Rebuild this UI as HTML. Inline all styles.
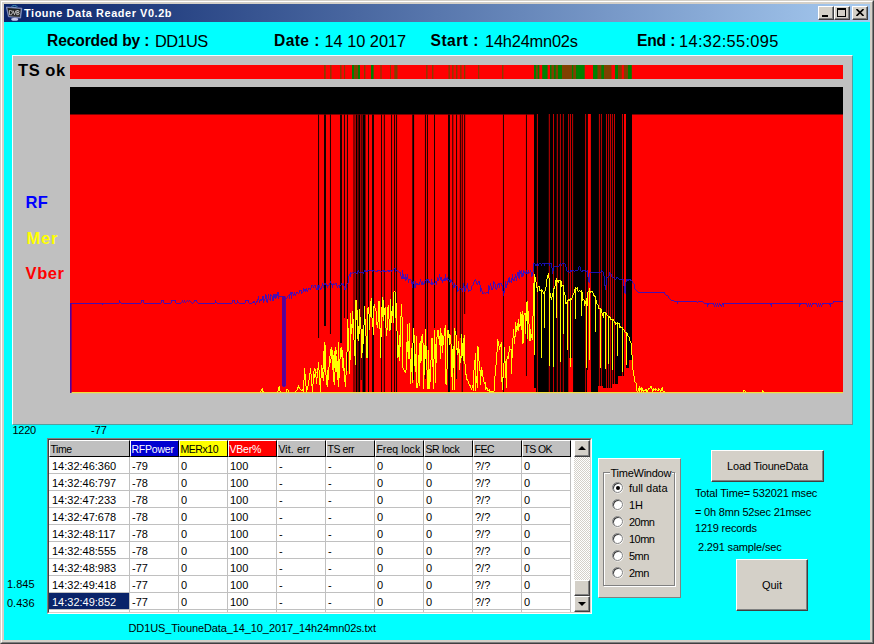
<!DOCTYPE html>
<html><head><meta charset="utf-8">
<style>
*{box-sizing:border-box;margin:0;padding:0}
html,body{width:874px;height:644px;overflow:hidden;background:#00ffff}
body{position:relative;font-family:"Liberation Sans",sans-serif;font-size:11px;color:#000}
.abs{position:absolute}
#frame{position:absolute;left:0;top:0;width:874px;height:644px;
 border-style:solid;border-width:1px;border-color:#d4d0c8 #404040 #404040 #d4d0c8}
#frame2{position:absolute;left:1px;top:1px;width:872px;height:642px;
 border-style:solid;border-width:1px;border-color:#fff #808080 #808080 #fff}
#frame3{position:absolute;left:2px;top:2px;width:870px;height:640px;border:2px solid #d4d0c8}
#title{position:absolute;left:4px;top:4px;width:866px;height:18px;
 background:linear-gradient(to right,#0a246a 0%,#a6caf0 100%)}
#title .t{position:absolute;left:20px;top:2px;color:#fff;font-weight:bold;font-size:10.9px;letter-spacing:0.58px;line-height:14px;white-space:nowrap}
.tb{position:absolute;top:2px;width:16px;height:14px;background:#d4d0c8;
 border-style:solid;border-width:1px;border-color:#fff #404040 #404040 #fff;box-shadow:inset -1px -1px 0 #808080}
.h{position:absolute;top:32px;line-height:18px;white-space:nowrap}
.hb{font-weight:bold;font-size:15.6px;top:31.5px}
.hr{font-size:16.4px;top:32px}
#panel{position:absolute;left:12px;top:55px;width:841px;height:370px;background:#c0c0c0;border-left:1px solid #f4ffff;border-top:1px solid #f4ffff;border-right:1px solid #50a0a0;border-bottom:1px solid #50a0a0}
.lbl{position:absolute;font-weight:bold;font-size:16.5px;letter-spacing:0.55px;line-height:18px;white-space:nowrap}
.s{position:absolute;font-size:11px;line-height:13px;white-space:nowrap}
#grid{position:absolute;left:47px;top:438px;width:545px;height:176px;background:#fff;
 border-style:solid;border-width:1px;border-color:#808080 #fff #fff #808080}
#grid .in{position:absolute;left:0;top:0;width:543px;height:174px;border-style:solid;border-width:1px;border-color:#404040 #d4d0c8 #d4d0c8 #404040;overflow:hidden}
.hc{position:absolute;top:0;height:17px;background:#c0c0c0;border-right:1px solid #000;border-bottom:1px solid #000;border-top:1px solid #fff;border-left:1px solid #fff;padding-left:0.4px;line-height:17px;font-size:10.5px;letter-spacing:-0.4px;white-space:nowrap;overflow:hidden}
.c{position:absolute;height:17px;border-right:1px solid #c0c0c0;border-bottom:1px solid #c0c0c0;padding-left:2px;padding-top:1px;line-height:17px;font-size:11px;white-space:nowrap;overflow:hidden}
.btn{position:absolute;background:#d4d0c8;border-style:solid;border-width:1px;border-color:#fff #404040 #404040 #fff;box-shadow:inset -1px -1px 0 #808080;text-align:center;font-size:11px}
.radio{position:absolute;left:612.3px;width:11px;height:11px;border-radius:50%;background:#fff;border:1px solid #808080;box-shadow:inset 1px 1px 0 #404040, 0.5px 0.5px 0 #fff}
.rl{position:absolute;left:629px;font-size:11px;line-height:13px;white-space:nowrap}
</style></head><body>
<div id="frame"></div><div id="frame2"></div><div id="frame3"></div>
<div id="title">
 <svg class="abs" style="left:2px;top:1px" width="17" height="17" viewBox="0 0 17 17">
  <ellipse cx="8.4" cy="1.5" rx="2.6" ry="1.0" fill="none" stroke="#4a9cc0" stroke-width="0.9"/>
  <ellipse cx="8.7" cy="14.3" rx="3.5" ry="1.5" fill="#c4ccec"/>
  <path d="M0.3 2.0 L15.9 3.2 L14.6 13.1 L2.4 11.7 Z" fill="#6f7aa8" stroke="#a4aed4" stroke-width="0.6" stroke-linejoin="round"/>
  <path d="M1.5 3.1 L14.7 4.1 L13.7 12.0 L3.1 10.9 Z" fill="#202020"/>
  <path d="M3.4 5.5 V9.7 H4.6 Q6.4 9.6 6.4 7.6 Q6.4 5.6 4.6 5.5 Z M7.0 5.5 L8.5 9.7 L10 5.5 M10.8 5.5 V9.7 H12.2 Q13.2 9.6 13.2 8.6 Q13.2 7.7 12.1 7.6 H10.8 M12.1 7.6 Q13 7.5 13 6.5 Q13 5.6 12.1 5.5 H10.8" fill="none" stroke="#d8d8d8" stroke-width="0.85" stroke-linejoin="round"/>
  <path d="M3.4 10.6 L13.4 11.5" stroke="#555" stroke-width="0.7"/>
 </svg>
 <div class="t">Tioune Data Reader V0.2b</div>
 <div class="tb" style="left:814px"><div class="abs" style="left:3px;top:8px;width:6px;height:2px;background:#000"></div></div>
 <div class="tb" style="left:830px"><div class="abs" style="left:2px;top:1px;width:9px;height:9px;border:1px solid #000;border-top-width:2px"></div></div>
 <div class="tb" style="left:848px"><svg class="abs" style="left:3px;top:2px" width="8" height="7" viewBox="0 0 8 7"><path d="M0.5 0 L7.5 7 M7.5 0 L0.5 7" stroke="#000" stroke-width="1.6"/></svg></div>
</div>

<div class="h hb" style="left:47px;letter-spacing:-0.12px">Recorded by :</div><div class="h hr" style="left:155px;letter-spacing:-0.58px">DD1US</div>
<div class="h hb" style="left:274px;letter-spacing:0.4px">Date :</div><div class="h hr" style="left:324.5px;letter-spacing:-0.04px">14 10 2017</div>
<div class="h hb" style="left:430.5px;letter-spacing:0.48px">Start :</div><div class="h hr" style="left:485px;letter-spacing:-0.2px">14h24mn02s</div>
<div class="h hb" style="left:637px;letter-spacing:-0.16px">End :</div><div class="h hr" style="left:679px;letter-spacing:0.33px">14:32:55:095</div>

<div id="panel"></div>
<svg class="abs" style="left:0;top:0" width="874" height="430" viewBox="0 0 874 430">
<rect x="70" y="65" width="773" height="14" fill="#f00"/>
<rect x="324.1" y="65" width="1.6" height="14" fill="#804000"/>
<rect x="330.1" y="65" width="1.4" height="14" fill="#804000"/>
<rect x="340.1" y="65" width="1.4" height="14" fill="#804000"/>
<rect x="344.1" y="65" width="1.0" height="14" fill="#804000"/>
<rect x="364.0" y="65" width="1.4" height="14" fill="#804000"/>
<rect x="380.4" y="65" width="1.2" height="14" fill="#804000"/>
<rect x="390.0" y="65" width="1.0" height="14" fill="#804000"/>
<rect x="426.2" y="65" width="1.3" height="14" fill="#804000"/>
<rect x="432.1" y="65" width="1.3" height="14" fill="#804000"/>
<rect x="448.5" y="65" width="1.3" height="14" fill="#804000"/>
<rect x="452.2" y="65" width="1.3" height="14" fill="#804000"/>
<rect x="456.1" y="65" width="1.3" height="14" fill="#804000"/>
<rect x="460.2" y="65" width="1.3" height="14" fill="#804000"/>
<rect x="464.0" y="65" width="1.3" height="14" fill="#804000"/>
<rect x="478.1" y="65" width="1.2" height="14" fill="#804000"/>
<rect x="502.1" y="65" width="1.3" height="14" fill="#804000"/>
<rect x="352.0" y="65" width="2.0" height="14" fill="#008000"/>
<rect x="354.0" y="65" width="4.0" height="14" fill="#804000"/>
<rect x="358.0" y="65" width="2.0" height="14" fill="#008000"/>
<rect x="371.0" y="65" width="2.6" height="14" fill="#008000"/>
<rect x="394.3" y="65" width="3.2" height="14" fill="#804000"/>
<rect x="534.0" y="65" width="2.0" height="14" fill="#008000"/>
<rect x="536.0" y="65" width="1.6" height="14" fill="#804000"/>
<rect x="537.6" y="65" width="1.8" height="14" fill="#008000"/>
<rect x="542.2" y="65" width="5.4" height="14" fill="#008000"/>
<rect x="550.0" y="65" width="1.8" height="14" fill="#008000"/>
<rect x="551.8" y="65" width="2.0" height="14" fill="#804000"/>
<rect x="553.8" y="65" width="2.1" height="14" fill="#008000"/>
<rect x="555.9" y="65" width="2.1" height="14" fill="#804000"/>
<rect x="558.0" y="65" width="4.0" height="14" fill="#008000"/>
<rect x="562.0" y="65" width="9.7" height="14" fill="#804000"/>
<rect x="571.7" y="65" width="2.0" height="14" fill="#008000"/>
<rect x="573.7" y="65" width="2.3" height="14" fill="#804000"/>
<rect x="576.0" y="65" width="8.7" height="14" fill="#008000"/>
<rect x="593.0" y="65" width="4.8" height="14" fill="#008000"/>
<rect x="597.8" y="65" width="3.4" height="14" fill="#804000"/>
<rect x="601.2" y="65" width="2.8" height="14" fill="#008000"/>
<rect x="604.0" y="65" width="7.5" height="14" fill="#804000"/>
<rect x="615.0" y="65" width="3.4" height="14" fill="#008000"/>
<rect x="618.4" y="65" width="3.4" height="14" fill="#804000"/>
<rect x="623.9" y="65" width="4.1" height="14" fill="#804000"/>
<rect x="628.0" y="65" width="3.8" height="14" fill="#008000"/>
<rect x="70" y="87" width="773" height="306" fill="#000"/>
<rect x="70" y="114.5" width="464" height="278.5" fill="#f00"/>
<rect x="632" y="114.5" width="211" height="278.5" fill="#f00"/>
<rect x="318.15" y="114.5" width="0.9" height="223.5" fill="#000"/>
<rect x="324.10" y="114.5" width="1.8" height="211.5" fill="#000"/>
<rect x="329.95" y="114.5" width="0.9" height="219.5" fill="#000"/>
<rect x="340.10" y="114.5" width="1.8" height="228.5" fill="#000"/>
<rect x="343.95" y="114.5" width="0.9" height="203.5" fill="#000"/>
<rect x="346.95" y="114.5" width="0.9" height="256.5" fill="#000"/>
<rect x="353.55" y="114.5" width="0.9" height="278.5" fill="#000"/>
<rect x="355.70" y="114.5" width="1.8" height="278.5" fill="#000"/>
<rect x="358.30" y="114.5" width="1.8" height="278.5" fill="#000"/>
<rect x="360.75" y="114.5" width="0.9" height="265.5" fill="#000"/>
<rect x="362.50" y="114.5" width="3.0" height="278.5" fill="#000"/>
<rect x="368.05" y="114.5" width="0.9" height="278.5" fill="#000"/>
<rect x="372.10" y="114.5" width="1.8" height="278.5" fill="#000"/>
<rect x="381.05" y="114.5" width="0.9" height="278.5" fill="#000"/>
<rect x="383.85" y="114.5" width="0.9" height="278.5" fill="#000"/>
<rect x="391.15" y="114.5" width="0.9" height="278.5" fill="#000"/>
<rect x="394.15" y="114.5" width="0.9" height="278.5" fill="#000"/>
<rect x="396.15" y="114.5" width="0.9" height="278.5" fill="#000"/>
<rect x="412.30" y="114.5" width="1.8" height="265.5" fill="#000"/>
<rect x="424.95" y="114.5" width="0.9" height="264.5" fill="#000"/>
<rect x="426.95" y="114.5" width="0.9" height="235.5" fill="#000"/>
<rect x="434.05" y="114.5" width="0.9" height="213.5" fill="#000"/>
<rect x="448.10" y="114.5" width="1.8" height="278.5" fill="#000"/>
<rect x="452.35" y="114.5" width="0.9" height="258.5" fill="#000"/>
<rect x="456.15" y="114.5" width="0.9" height="264.5" fill="#000"/>
<rect x="459.85" y="114.5" width="0.9" height="223.5" fill="#000"/>
<rect x="461.75" y="114.5" width="0.9" height="278.5" fill="#000"/>
<rect x="464.25" y="114.5" width="0.9" height="199.5" fill="#000"/>
<rect x="502.95" y="114.5" width="0.9" height="278.5" fill="#000"/>
<rect x="525.95" y="114.5" width="0.9" height="261.5" fill="#000"/>
<rect x="536.90" y="114" width="1" height="279" fill="#f00" opacity="0.78"/>
<rect x="548.80" y="114" width="1" height="279" fill="#f00" opacity="0.78"/>
<rect x="553.00" y="114" width="1" height="279" fill="#f00" opacity="0.78"/>
<rect x="556.80" y="114" width="1" height="279" fill="#f00" opacity="0.78"/>
<rect x="559.90" y="114" width="1" height="279" fill="#f00" opacity="0.78"/>
<rect x="562.80" y="114" width="1" height="279" fill="#f00" opacity="0.78"/>
<rect x="568.10" y="114" width="1" height="279" fill="#f00" opacity="0.78"/>
<rect x="570.00" y="114" width="1" height="279" fill="#f00" opacity="0.78"/>
<rect x="572.10" y="114" width="1" height="279" fill="#f00" opacity="0.78"/>
<rect x="585.10" y="114" width="1" height="279" fill="#f00" opacity="0.78"/>
<rect x="587.90" y="114" width="3" height="279" fill="#f00" opacity="1"/>
<rect x="598.90" y="114" width="1" height="279" fill="#f00" opacity="0.78"/>
<rect x="600.90" y="114" width="1" height="279" fill="#f00" opacity="0.78"/>
<rect x="606.00" y="114" width="1" height="279" fill="#f00" opacity="0.78"/>
<rect x="608.10" y="114" width="1" height="279" fill="#f00" opacity="0.78"/>
<rect x="610.00" y="114" width="1" height="279" fill="#f00" opacity="0.78"/>
<rect x="611.90" y="114" width="1" height="279" fill="#f00" opacity="0.78"/>
<rect x="614.00" y="114" width="1" height="279" fill="#f00" opacity="0.78"/>
<rect x="622.00" y="114" width="1" height="279" fill="#f00" opacity="0.78"/>
<rect x="624.00" y="114" width="2" height="279" fill="#f00" opacity="1"/>
<rect x="534" y="388" width="2" height="5" fill="#f00"/>
<rect x="569" y="358" width="4" height="35" fill="#f00"/>
<rect x="587" y="370" width="4" height="23" fill="#f00"/>
<rect x="598" y="386" width="5" height="7" fill="#f00"/>
<rect x="603" y="388" width="9" height="5" fill="#f00"/>
<rect x="612" y="384" width="6" height="9" fill="#f00"/>
<rect x="618" y="376" width="6" height="17" fill="#f00"/>
<rect x="624" y="368" width="5" height="25" fill="#f00"/>
<rect x="629" y="360" width="3" height="33" fill="#f00"/>
<path d="M70,392h1v1h-1zM71,392h1v1h-1zM72,392h1v1h-1zM73,392h1v1h-1zM74,392h1v1h-1zM75,392h1v1h-1zM76,392h1v1h-1zM77,392h1v1h-1zM78,392h1v1h-1zM79,392h1v1h-1zM80,392h1v1h-1zM81,392h1v1h-1zM82,392h1v1h-1zM83,392h1v1h-1zM84,392h1v1h-1zM85,392h1v1h-1zM86,392h1v1h-1zM87,392h1v1h-1zM88,392h1v1h-1zM89,392h1v1h-1zM90,392h1v1h-1zM91,392h1v1h-1zM92,392h1v1h-1zM93,392h1v1h-1zM94,392h1v1h-1zM95,392h1v1h-1zM96,392h1v1h-1zM97,392h1v1h-1zM98,392h1v1h-1zM99,392h1v1h-1zM100,392h1v1h-1zM101,392h1v1h-1zM102,392h1v1h-1zM103,392h1v1h-1zM104,392h1v1h-1zM105,392h1v1h-1zM106,392h1v1h-1zM107,392h1v1h-1zM108,392h1v1h-1zM109,392h1v1h-1zM110,392h1v1h-1zM111,392h1v1h-1zM112,392h1v1h-1zM113,392h1v1h-1zM114,392h1v1h-1zM115,392h1v1h-1zM116,392h1v1h-1zM117,392h1v1h-1zM118,392h1v1h-1zM119,392h1v1h-1zM120,392h1v1h-1zM121,392h1v1h-1zM122,392h1v1h-1zM123,392h1v1h-1zM124,392h1v1h-1zM125,392h1v1h-1zM126,392h1v1h-1zM127,392h1v1h-1zM128,392h1v1h-1zM129,392h1v1h-1zM130,392h1v1h-1zM131,392h1v1h-1zM132,392h1v1h-1zM133,392h1v1h-1zM134,392h1v1h-1zM135,392h1v1h-1zM136,392h1v1h-1zM137,392h1v1h-1zM138,392h1v1h-1zM139,392h1v1h-1zM140,392h1v1h-1zM141,392h1v1h-1zM142,392h1v1h-1zM143,392h1v1h-1zM144,392h1v1h-1zM145,392h1v1h-1zM146,392h1v1h-1zM147,392h1v1h-1zM148,392h1v1h-1zM149,392h1v1h-1zM150,392h1v1h-1zM151,392h1v1h-1zM152,392h1v1h-1zM153,392h1v1h-1zM154,392h1v1h-1zM155,392h1v1h-1zM156,392h1v1h-1zM157,392h1v1h-1zM158,392h1v1h-1zM159,392h1v1h-1zM160,392h1v1h-1zM161,392h1v1h-1zM162,392h1v1h-1zM163,392h1v1h-1zM164,392h1v1h-1zM165,392h1v1h-1zM166,392h1v1h-1zM167,392h1v1h-1zM168,392h1v1h-1zM169,392h1v1h-1zM170,392h1v1h-1zM171,392h1v1h-1zM172,392h1v1h-1zM173,392h1v1h-1zM174,392h1v1h-1zM175,392h1v1h-1zM176,392h1v1h-1zM177,392h1v1h-1zM178,392h1v1h-1zM179,392h1v1h-1zM180,392h1v1h-1zM181,392h1v1h-1zM182,392h1v1h-1zM183,392h1v1h-1zM184,392h1v1h-1zM185,392h1v1h-1zM186,392h1v1h-1zM187,392h1v1h-1zM188,392h1v1h-1zM189,392h1v1h-1zM190,392h1v1h-1zM191,392h1v1h-1zM192,392h1v1h-1zM193,392h1v1h-1zM194,392h1v1h-1zM195,392h1v1h-1zM196,392h1v1h-1zM197,392h1v1h-1zM198,392h1v1h-1zM199,392h1v1h-1zM200,392h1v1h-1zM201,392h1v1h-1zM202,392h1v1h-1zM203,392h1v1h-1zM204,392h1v1h-1zM205,392h1v1h-1zM206,392h1v1h-1zM207,392h1v1h-1zM208,392h1v1h-1zM209,392h1v1h-1zM210,392h1v1h-1zM211,392h1v1h-1zM212,392h1v1h-1zM213,392h1v1h-1zM214,392h1v1h-1zM215,392h1v1h-1zM216,392h1v1h-1zM217,392h1v1h-1zM218,392h1v1h-1zM219,392h1v1h-1zM220,392h1v1h-1zM221,392h1v1h-1zM222,392h1v1h-1zM223,392h1v1h-1zM224,392h1v1h-1zM225,392h1v1h-1zM226,392h1v1h-1zM227,392h1v1h-1zM228,392h1v1h-1zM229,392h1v1h-1zM230,392h1v1h-1zM231,392h1v1h-1zM232,392h1v1h-1zM233,392h1v1h-1zM234,392h1v1h-1zM235,392h1v1h-1zM236,392h1v1h-1zM237,392h1v1h-1zM238,392h1v1h-1zM239,392h1v1h-1zM240,392h1v1h-1zM241,392h1v1h-1zM242,392h1v1h-1zM243,392h1v1h-1zM244,392h1v1h-1zM245,392h1v1h-1zM246,392h1v1h-1zM247,392h1v1h-1zM248,392h1v1h-1zM249,392h1v1h-1zM250,392h1v1h-1zM251,392h1v1h-1zM252,392h1v1h-1zM253,392h1v1h-1zM254,392h1v1h-1zM255,392h1v1h-1zM256,392h1v1h-1zM257,392h1v1h-1zM258,392h1v1h-1zM259,392h1v1h-1zM260,391h1v1h-1zM261,389h1v2h-1zM262,388h1v4h-1zM263,391h1v1h-1zM264,392h1v1h-1zM265,392h1v1h-1zM266,392h1v1h-1zM267,392h1v1h-1zM268,392h1v1h-1zM269,392h1v1h-1zM270,392h1v1h-1zM271,392h1v1h-1zM272,392h1v1h-1zM273,392h1v1h-1zM274,392h1v1h-1zM275,392h1v1h-1zM276,392h1v1h-1zM277,391h1v1h-1zM278,387h1v4h-1zM279,386h1v5h-1zM280,391h1v1h-1zM281,392h1v1h-1zM282,392h1v1h-1zM283,392h1v1h-1zM284,392h1v1h-1zM285,392h1v1h-1zM286,389h1v3h-1zM287,389h1v1h-1zM288,390h1v2h-1zM289,392h1v1h-1zM290,392h1v1h-1zM291,392h1v1h-1zM292,392h1v1h-1zM293,392h1v1h-1zM294,392h1v1h-1zM295,391h1v1h-1zM296,390h1v1h-1zM297,387h1v3h-1zM298,385h1v3h-1zM299,387h1v2h-1zM300,389h1v1h-1zM301,390h1v1h-1zM302,389h1v2h-1zM303,380h1v12h-1zM304,368h1v12h-1zM305,374h1v12h-1zM306,386h1v6h-1zM307,386h1v4h-1zM308,380h1v6h-1zM309,373h1v7h-1zM310,368h1v6h-1zM311,374h1v12h-1zM312,384h1v8h-1zM313,371h1v13h-1zM314,368h1v3h-1zM315,369h1v8h-1zM316,377h1v7h-1zM317,368h1v10h-1zM318,362h1v8h-1zM319,370h1v15h-1zM320,378h1v14h-1zM321,365h1v13h-1zM322,369h1v9h-1zM323,351h1v18h-1zM324,342h1v12h-1zM325,354h1v21h-1zM326,375h1v10h-1zM327,370h1v17h-1zM328,367h1v13h-1zM329,356h1v11h-1zM330,349h1v7h-1zM331,347h1v5h-1zM332,352h1v18h-1zM333,368h1v14h-1zM334,351h1v17h-1zM335,347h1v9h-1zM336,356h1v16h-1zM337,361h1v19h-1zM338,342h1v45h-1zM339,359h1v19h-1zM340,348h1v11h-1zM341,347h1v10h-1zM342,357h1v11h-1zM343,358h1v10h-1zM344,368h1v14h-1zM345,375h1v12h-1zM346,352h1v23h-1zM347,319h1v33h-1zM348,328h1v23h-1zM349,351h1v23h-1zM350,313h1v47h-1zM351,324h1v10h-1zM352,311h1v17h-1zM353,319h1v21h-1zM354,340h1v16h-1zM355,300h1v65h-1zM356,300h1v20h-1zM357,310h1v29h-1zM358,326h1v15h-1zM359,309h1v25h-1zM360,317h1v12h-1zM361,329h1v29h-1zM362,329h1v24h-1zM363,325h1v19h-1zM364,306h1v19h-1zM365,319h1v17h-1zM366,336h1v22h-1zM367,308h1v50h-1zM368,307h1v7h-1zM369,314h1v16h-1zM370,301h1v16h-1zM371,298h1v20h-1zM372,318h1v9h-1zM373,306h1v29h-1zM374,304h1v4h-1zM375,308h1v3h-1zM376,311h1v14h-1zM377,322h1v6h-1zM378,301h1v21h-1zM379,301h1v28h-1zM380,328h1v30h-1zM381,307h1v30h-1zM382,297h1v20h-1zM383,300h1v21h-1zM384,308h1v7h-1zM385,307h1v21h-1zM386,328h1v8h-1zM387,307h1v23h-1zM388,305h1v14h-1zM389,319h1v12h-1zM390,299h1v31h-1zM391,311h1v12h-1zM392,306h1v10h-1zM393,292h1v31h-1zM394,291h1v1h-1zM395,292h1v26h-1zM396,303h1v28h-1zM397,331h1v27h-1zM398,345h1v12h-1zM399,335h1v26h-1zM400,316h1v31h-1zM401,304h1v13h-1zM402,317h1v51h-1zM403,368h1v2h-1zM404,370h1v2h-1zM405,370h1v3h-1zM406,342h1v28h-1zM407,324h1v28h-1zM408,341h1v18h-1zM409,323h1v36h-1zM410,359h1v25h-1zM411,348h1v24h-1zM412,343h1v40h-1zM413,328h1v15h-1zM414,335h1v31h-1zM415,354h1v18h-1zM416,336h1v52h-1zM417,383h1v5h-1zM418,355h1v28h-1zM419,343h1v43h-1zM420,341h1v22h-1zM421,336h1v25h-1zM422,334h1v9h-1zM423,343h1v46h-1zM424,345h1v30h-1zM425,329h1v30h-1zM426,346h1v24h-1zM427,370h1v19h-1zM428,350h1v39h-1zM429,369h1v20h-1zM430,360h1v22h-1zM431,338h1v22h-1zM432,338h1v29h-1zM433,359h1v30h-1zM434,330h1v29h-1zM435,344h1v39h-1zM436,337h1v26h-1zM437,330h1v7h-1zM438,330h1v9h-1zM439,336h1v9h-1zM440,328h1v31h-1zM441,333h1v13h-1zM442,335h1v18h-1zM443,336h1v9h-1zM444,328h1v8h-1zM445,325h1v59h-1zM446,369h1v16h-1zM447,330h1v39h-1zM448,330h1v8h-1zM449,334h1v11h-1zM450,335h1v9h-1zM451,344h1v33h-1zM452,349h1v41h-1zM453,346h1v22h-1zM454,328h1v62h-1zM455,331h1v4h-1zM456,335h1v15h-1zM457,348h1v7h-1zM458,341h1v12h-1zM459,349h1v21h-1zM460,356h1v7h-1zM461,334h1v24h-1zM462,343h1v13h-1zM463,338h1v23h-1zM464,335h1v29h-1zM465,364h1v11h-1zM466,374h1v6h-1zM467,379h1v2h-1zM468,381h1v3h-1zM469,384h1v2h-1zM470,385h1v3h-1zM471,388h1v2h-1zM472,385h1v3h-1zM473,370h1v21h-1zM474,360h1v10h-1zM475,353h1v38h-1zM476,376h1v7h-1zM477,346h1v42h-1zM478,347h1v14h-1zM479,361h1v10h-1zM480,370h1v15h-1zM481,367h1v9h-1zM482,370h1v7h-1zM483,377h1v5h-1zM484,382h1v2h-1zM485,382h1v8h-1zM486,387h1v2h-1zM487,388h1v3h-1zM488,390h1v1h-1zM489,389h1v3h-1zM490,391h1v1h-1zM491,391h1v1h-1zM492,391h1v1h-1zM493,391h1v1h-1zM494,376h1v15h-1zM495,365h1v11h-1zM496,352h1v13h-1zM497,339h1v13h-1zM498,341h1v5h-1zM499,346h1v4h-1zM500,344h1v3h-1zM501,342h1v40h-1zM502,377h1v13h-1zM503,363h1v15h-1zM504,347h1v16h-1zM505,361h1v17h-1zM506,359h1v29h-1zM507,356h1v3h-1zM508,352h1v7h-1zM509,346h1v6h-1zM510,349h1v1h-1zM511,349h1v25h-1zM512,338h1v20h-1zM513,329h1v9h-1zM514,336h1v8h-1zM515,322h1v15h-1zM516,326h1v6h-1zM517,323h1v7h-1zM518,319h1v12h-1zM519,324h1v3h-1zM520,312h1v14h-1zM521,314h1v16h-1zM522,311h1v33h-1zM523,315h1v28h-1zM524,313h1v2h-1zM525,313h1v21h-1zM526,302h1v19h-1zM527,301h1v38h-1zM528,311h1v13h-1zM529,324h1v17h-1zM530,329h1v12h-1zM531,334h1v4h-1zM532,316h1v24h-1zM533,283h1v33h-1zM534,274h1v81h-1zM535,277h1v5h-1zM536,282h1v6h-1zM537,287h1v5h-1zM538,286h1v1h-1zM539,286h1v5h-1zM540,290h1v1h-1zM541,289h1v69h-1zM542,290h1v2h-1zM543,292h1v2h-1zM544,291h1v37h-1zM545,287h1v4h-1zM546,279h1v8h-1zM547,275h1v4h-1zM548,273h1v5h-1zM549,278h1v88h-1zM550,293h1v5h-1zM551,297h1v3h-1zM552,293h1v4h-1zM553,288h1v79h-1zM554,286h1v3h-1zM555,280h1v6h-1zM556,278h1v40h-1zM557,280h1v2h-1zM558,280h1v3h-1zM559,280h1v1h-1zM560,280h1v82h-1zM561,281h1v6h-1zM562,285h1v1h-1zM563,285h1v49h-1zM564,292h1v3h-1zM565,295h1v9h-1zM566,302h1v2h-1zM567,300h1v50h-1zM568,299h1v2h-1zM569,299h1v2h-1zM570,298h1v69h-1zM571,298h1v2h-1zM572,295h1v3h-1zM573,293h1v2h-1zM574,289h1v4h-1zM575,287h1v32h-1zM576,288h1v1h-1zM577,287h1v4h-1zM578,291h1v1h-1zM579,290h1v1h-1zM580,291h1v1h-1zM581,290h1v26h-1zM582,292h1v9h-1zM583,299h1v1h-1zM584,300h1v6h-1zM585,301h1v3h-1zM586,298h1v70h-1zM587,292h1v14h-1zM588,291h1v1h-1zM589,288h1v72h-1zM590,291h1v2h-1zM591,291h1v1h-1zM592,291h1v2h-1zM593,293h1v3h-1zM594,295h1v2h-1zM595,296h1v36h-1zM596,300h1v4h-1zM597,304h1v1h-1zM598,305h1v4h-1zM599,308h1v1h-1zM600,308h1v60h-1zM601,309h1v4h-1zM602,313h1v3h-1zM603,312h1v6h-1zM604,312h1v1h-1zM605,312h1v57h-1zM606,313h1v2h-1zM607,315h1v1h-1zM608,316h1v48h-1zM609,316h1v2h-1zM610,317h1v3h-1zM611,319h1v1h-1zM612,319h1v51h-1zM613,319h1v2h-1zM614,321h1v2h-1zM615,322h1v3h-1zM616,323h1v1h-1zM617,322h1v34h-1zM618,323h1v1h-1zM619,323h1v5h-1zM620,326h1v2h-1zM621,327h1v1h-1zM622,327h1v45h-1zM623,329h1v1h-1zM624,330h1v2h-1zM625,332h1v1h-1zM626,332h1v33h-1zM627,333h1v3h-1zM628,336h1v1h-1zM629,337h1v4h-1zM630,341h1v2h-1zM631,343h1v12h-1zM632,355h1v15h-1zM633,370h1v6h-1zM634,376h1v6h-1zM635,382h1v1h-1zM636,383h1v8h-1zM637,391h1v1h-1zM638,388h1v3h-1zM639,386h1v6h-1zM640,388h1v2h-1zM641,387h1v5h-1zM642,388h1v3h-1zM643,390h1v2h-1zM644,390h1v1h-1zM645,389h1v2h-1zM646,389h1v3h-1zM647,390h1v2h-1zM648,388h1v2h-1zM649,388h1v1h-1zM650,386h1v2h-1zM651,386h1v3h-1zM652,389h1v3h-1zM653,388h1v3h-1zM654,389h1v1h-1zM655,388h1v3h-1zM656,389h1v1h-1zM657,390h1v1h-1zM658,388h1v3h-1zM659,389h1v1h-1zM660,390h1v2h-1zM661,388h1v3h-1zM662,387h1v4h-1zM663,391h1v1h-1zM664,391h1v1h-1zM665,392h1v1h-1zM666,392h1v1h-1zM667,392h1v1h-1zM668,392h1v1h-1zM669,392h1v1h-1zM670,392h1v1h-1zM671,392h1v1h-1zM672,392h1v1h-1zM673,392h1v1h-1zM674,392h1v1h-1zM675,392h1v1h-1zM676,392h1v1h-1zM677,392h1v1h-1zM678,392h1v1h-1zM679,392h1v1h-1zM680,392h1v1h-1zM681,392h1v1h-1zM682,392h1v1h-1zM683,392h1v1h-1zM684,392h1v1h-1zM685,392h1v1h-1zM686,392h1v1h-1zM687,392h1v1h-1zM688,392h1v1h-1zM689,392h1v1h-1zM690,392h1v1h-1zM691,392h1v1h-1zM692,392h1v1h-1zM693,392h1v1h-1zM694,392h1v1h-1zM695,392h1v1h-1zM696,392h1v1h-1zM697,392h1v1h-1zM698,392h1v1h-1zM699,392h1v1h-1zM700,392h1v1h-1zM701,392h1v1h-1zM702,392h1v1h-1zM703,392h1v1h-1zM704,392h1v1h-1zM705,392h1v1h-1zM706,392h1v1h-1zM707,392h1v1h-1zM708,392h1v1h-1zM709,392h1v1h-1zM710,392h1v1h-1zM711,392h1v1h-1zM712,392h1v1h-1zM713,392h1v1h-1zM714,392h1v1h-1zM715,392h1v1h-1zM716,392h1v1h-1zM717,392h1v1h-1zM718,392h1v1h-1zM719,392h1v1h-1zM720,392h1v1h-1zM721,392h1v1h-1zM722,392h1v1h-1zM723,392h1v1h-1zM724,392h1v1h-1zM725,392h1v1h-1zM726,392h1v1h-1zM727,392h1v1h-1zM728,392h1v1h-1zM729,392h1v1h-1zM730,392h1v1h-1zM731,392h1v1h-1zM732,392h1v1h-1zM733,392h1v1h-1zM734,392h1v1h-1zM735,392h1v1h-1zM736,392h1v1h-1zM737,392h1v1h-1zM738,392h1v1h-1zM739,392h1v1h-1zM740,392h1v1h-1zM741,392h1v1h-1zM742,392h1v1h-1zM743,390h1v2h-1zM744,390h1v1h-1zM745,391h1v1h-1zM746,392h1v1h-1zM747,392h1v1h-1zM748,392h1v1h-1zM749,392h1v1h-1zM750,392h1v1h-1zM751,392h1v1h-1zM752,392h1v1h-1zM753,392h1v1h-1zM754,392h1v1h-1zM755,392h1v1h-1zM756,392h1v1h-1zM757,392h1v1h-1zM758,392h1v1h-1zM759,392h1v1h-1zM760,392h1v1h-1zM761,392h1v1h-1zM762,390h1v2h-1zM763,391h1v1h-1zM764,392h1v1h-1zM765,392h1v1h-1zM766,392h1v1h-1zM767,392h1v1h-1zM768,392h1v1h-1zM769,392h1v1h-1zM770,392h1v1h-1zM771,392h1v1h-1zM772,392h1v1h-1zM773,392h1v1h-1zM774,392h1v1h-1zM775,392h1v1h-1zM776,392h1v1h-1zM777,392h1v1h-1zM778,392h1v1h-1zM779,392h1v1h-1zM780,392h1v1h-1zM781,392h1v1h-1zM782,392h1v1h-1zM783,392h1v1h-1zM784,392h1v1h-1zM785,392h1v1h-1zM786,392h1v1h-1zM787,392h1v1h-1zM788,392h1v1h-1zM789,392h1v1h-1zM790,392h1v1h-1zM791,392h1v1h-1zM792,392h1v1h-1zM793,392h1v1h-1zM794,392h1v1h-1zM795,392h1v1h-1zM796,392h1v1h-1zM797,392h1v1h-1zM798,392h1v1h-1zM799,392h1v1h-1zM800,392h1v1h-1zM801,392h1v1h-1zM802,392h1v1h-1zM803,392h1v1h-1zM804,392h1v1h-1zM805,392h1v1h-1zM806,392h1v1h-1zM807,392h1v1h-1zM808,392h1v1h-1zM809,392h1v1h-1zM810,392h1v1h-1zM811,392h1v1h-1zM812,392h1v1h-1zM813,392h1v1h-1zM814,392h1v1h-1zM815,392h1v1h-1zM816,392h1v1h-1zM817,392h1v1h-1zM818,392h1v1h-1zM819,392h1v1h-1zM820,392h1v1h-1zM821,392h1v1h-1zM822,392h1v1h-1zM823,392h1v1h-1zM824,392h1v1h-1zM825,392h1v1h-1zM826,392h1v1h-1zM827,392h1v1h-1zM828,392h1v1h-1zM829,392h1v1h-1zM830,392h1v1h-1zM831,392h1v1h-1zM832,392h1v1h-1zM833,392h1v1h-1zM834,392h1v1h-1zM835,392h1v1h-1zM836,392h1v1h-1zM837,392h1v1h-1zM838,392h1v1h-1zM839,392h1v1h-1zM840,392h1v1h-1zM841,392h1v1h-1zM842,392h1v1h-1z" fill="#ffff00" shape-rendering="crispEdges"/>
<path d="M314,374h1v4h-1zM315,370h1v4h-1zM316,372h1v1h-1z" fill="#ffff00" shape-rendering="crispEdges"/>
<path d="M322,368h1v6h-1zM323,372h1v9h-1zM324,354h1v18h-1zM325,345h1v9h-1z" fill="#ffff00" shape-rendering="crispEdges"/>
<path d="M330,359h1v4h-1zM331,352h1v7h-1zM332,350h1v5h-1zM333,355h1v18h-1zM334,372h1v13h-1zM335,354h1v18h-1zM336,350h1v4h-1z" fill="#ffff00" shape-rendering="crispEdges"/>
<path d="M341,351h1v2h-1zM342,350h1v10h-1zM343,360h1v11h-1z" fill="#ffff00" shape-rendering="crispEdges"/>
<rect x="70" y="392" width="773" height="1.2" fill="#f0e040"/>
<path opacity="0.8" d="M70,303h1v89h-1zM71,303h1v1h-1zM72,303h1v1h-1zM73,303h1v1h-1zM74,303h1v1h-1zM75,303h1v1h-1zM76,303h1v1h-1zM77,303h1v1h-1zM78,303h1v1h-1zM79,303h1v1h-1zM80,303h1v1h-1zM81,303h1v1h-1zM82,303h1v1h-1zM83,303h1v1h-1zM84,303h1v1h-1zM85,303h1v1h-1zM86,303h1v1h-1zM87,303h1v1h-1zM88,303h1v1h-1zM89,303h1v1h-1zM90,303h1v1h-1zM91,303h1v1h-1zM92,303h1v1h-1zM93,303h1v1h-1zM94,303h1v1h-1zM95,303h1v1h-1zM96,303h1v1h-1zM97,303h1v1h-1zM98,303h1v1h-1zM99,303h1v1h-1zM100,303h1v1h-1zM101,303h1v1h-1zM102,303h1v2h-1zM103,303h1v1h-1zM104,303h1v1h-1zM105,303h1v1h-1zM106,303h1v1h-1zM107,303h1v1h-1zM108,303h1v1h-1zM109,303h1v1h-1zM110,303h1v1h-1zM111,303h1v1h-1zM112,303h1v1h-1zM113,303h1v1h-1zM114,303h1v1h-1zM115,303h1v1h-1zM116,303h1v1h-1zM117,303h1v1h-1zM118,303h1v1h-1zM119,300h1v3h-1zM120,302h1v1h-1zM121,303h1v1h-1zM122,303h1v1h-1zM123,303h1v1h-1zM124,303h1v1h-1zM125,303h1v1h-1zM126,303h1v1h-1zM127,303h1v1h-1zM128,303h1v1h-1zM129,303h1v1h-1zM130,303h1v1h-1zM131,303h1v1h-1zM132,303h1v1h-1zM133,303h1v1h-1zM134,303h1v1h-1zM135,303h1v1h-1zM136,303h1v1h-1zM137,303h1v1h-1zM138,303h1v1h-1zM139,303h1v1h-1zM140,303h1v1h-1zM141,300h1v3h-1zM142,300h1v1h-1zM143,300h1v3h-1zM144,303h1v1h-1zM145,303h1v1h-1zM146,303h1v1h-1zM147,303h1v1h-1zM148,303h1v1h-1zM149,303h1v1h-1zM150,303h1v1h-1zM151,303h1v1h-1zM152,303h1v1h-1zM153,303h1v1h-1zM154,303h1v1h-1zM155,303h1v1h-1zM156,303h1v1h-1zM157,303h1v1h-1zM158,303h1v1h-1zM159,303h1v1h-1zM160,303h1v1h-1zM161,300h1v3h-1zM162,300h1v1h-1zM163,300h1v3h-1zM164,303h1v1h-1zM165,303h1v1h-1zM166,303h1v1h-1zM167,303h1v1h-1zM168,303h1v1h-1zM169,303h1v1h-1zM170,303h1v1h-1zM171,300h1v3h-1zM172,300h1v1h-1zM173,300h1v1h-1zM174,300h1v1h-1zM175,300h1v3h-1zM176,303h1v1h-1zM177,303h1v1h-1zM178,303h1v1h-1zM179,303h1v1h-1zM180,303h1v1h-1zM181,302h1v1h-1zM182,300h1v2h-1zM183,302h1v1h-1zM184,300h1v2h-1zM185,302h1v1h-1zM186,301h1v1h-1zM187,300h1v1h-1zM188,301h1v1h-1zM189,300h1v1h-1zM190,301h1v1h-1zM191,302h1v1h-1zM192,303h1v1h-1zM193,302h1v1h-1zM194,300h1v2h-1zM195,300h1v1h-1zM196,300h1v2h-1zM197,302h1v1h-1zM198,303h1v1h-1zM199,303h1v1h-1zM200,303h1v1h-1zM201,303h1v1h-1zM202,303h1v1h-1zM203,303h1v1h-1zM204,303h1v1h-1zM205,303h1v1h-1zM206,303h1v1h-1zM207,303h1v1h-1zM208,303h1v1h-1zM209,303h1v1h-1zM210,303h1v1h-1zM211,303h1v1h-1zM212,303h1v1h-1zM213,303h1v1h-1zM214,303h1v1h-1zM215,300h1v3h-1zM216,302h1v1h-1zM217,303h1v1h-1zM218,303h1v1h-1zM219,303h1v1h-1zM220,303h1v1h-1zM221,303h1v1h-1zM222,303h1v1h-1zM223,303h1v1h-1zM224,303h1v1h-1zM225,303h1v1h-1zM226,303h1v1h-1zM227,303h1v1h-1zM228,303h1v1h-1zM229,303h1v1h-1zM230,303h1v1h-1zM231,303h1v1h-1zM232,300h1v3h-1zM233,300h1v1h-1zM234,300h1v3h-1zM235,303h1v1h-1zM236,303h1v1h-1zM237,300h1v3h-1zM238,302h1v1h-1zM239,303h1v1h-1zM240,303h1v1h-1zM241,303h1v1h-1zM242,303h1v1h-1zM243,303h1v1h-1zM244,303h1v1h-1zM245,300h1v3h-1zM246,300h1v1h-1zM247,300h1v1h-1zM248,300h1v3h-1zM249,303h1v1h-1zM250,303h1v1h-1zM251,303h1v1h-1zM252,302h1v1h-1zM253,301h1v2h-1zM254,301h1v2h-1zM255,303h1v2h-1zM256,301h1v2h-1zM257,299h1v3h-1zM258,296h1v4h-1zM259,300h1v3h-1zM260,299h1v2h-1zM261,299h1v2h-1zM262,296h1v4h-1zM263,296h1v7h-1zM264,299h1v2h-1zM265,294h1v5h-1zM266,295h1v7h-1zM267,299h1v4h-1zM268,294h1v5h-1zM269,299h1v1h-1zM270,294h1v7h-1zM271,295h1v1h-1zM272,296h1v5h-1zM273,294h1v7h-1zM274,294h1v4h-1zM275,294h1v5h-1zM276,294h1v4h-1zM277,292h1v4h-1zM278,292h1v7h-1zM279,296h1v1h-1zM280,296h1v1h-1zM281,296h1v1h-1zM282,296h1v90h-1zM283,386h1v1h-1zM284,386h1v1h-1zM285,297h1v89h-1zM286,298h1v1h-1zM287,296h1v2h-1zM288,295h1v1h-1zM289,294h1v5h-1zM290,292h1v3h-1zM291,292h1v7h-1zM292,292h1v2h-1zM293,294h1v2h-1zM294,292h1v3h-1zM295,294h1v2h-1zM296,292h1v2h-1zM297,292h1v1h-1zM298,293h1v1h-1zM299,290h1v3h-1zM300,290h1v1h-1zM301,290h1v4h-1zM302,292h1v1h-1zM303,288h1v4h-1zM304,289h1v2h-1zM305,289h1v3h-1zM306,288h1v3h-1zM307,290h1v2h-1zM308,288h1v2h-1zM309,288h1v1h-1zM310,288h1v2h-1zM311,285h1v3h-1zM312,285h1v1h-1zM313,286h1v2h-1zM314,285h1v1h-1zM315,285h1v3h-1zM316,288h1v2h-1zM317,285h1v5h-1zM318,285h1v5h-1zM319,285h1v3h-1zM320,288h1v2h-1zM321,286h1v3h-1zM322,283h1v3h-1zM323,285h1v3h-1zM324,283h1v2h-1zM325,283h1v2h-1zM326,284h1v2h-1zM327,285h1v3h-1zM328,285h1v1h-1zM329,283h1v2h-1zM330,281h1v2h-1zM331,283h1v2h-1zM332,284h1v4h-1zM333,283h1v2h-1zM334,284h1v1h-1zM335,283h1v1h-1zM336,283h1v3h-1zM337,286h1v2h-1zM338,285h1v1h-1zM339,285h1v3h-1zM340,285h1v1h-1zM341,283h1v2h-1zM342,284h1v1h-1zM343,283h1v3h-1zM344,286h1v4h-1zM345,288h1v2h-1zM346,284h1v4h-1zM347,283h1v1h-1zM348,276h1v7h-1zM349,274h1v2h-1zM350,272h1v5h-1zM351,273h1v1h-1zM352,272h1v1h-1zM353,273h1v1h-1zM354,272h1v1h-1zM355,272h1v1h-1zM356,273h1v1h-1zM357,271h1v3h-1zM358,270h1v2h-1zM359,272h1v1h-1zM360,272h1v1h-1zM361,272h1v1h-1zM362,272h1v1h-1zM363,272h1v2h-1zM364,270h1v2h-1zM365,270h1v2h-1zM366,271h1v1h-1zM367,270h1v2h-1zM368,270h1v1h-1zM369,270h1v1h-1zM370,270h1v1h-1zM371,270h1v1h-1zM372,270h1v2h-1zM373,270h1v1h-1zM374,270h1v1h-1zM375,271h1v1h-1zM376,271h1v1h-1zM377,270h1v2h-1zM378,270h1v1h-1zM379,270h1v1h-1zM380,271h1v1h-1zM381,271h1v1h-1zM382,270h1v1h-1zM383,270h1v2h-1zM384,270h1v2h-1zM385,271h1v1h-1zM386,271h1v1h-1zM387,270h1v1h-1zM388,270h1v2h-1zM389,270h1v2h-1zM390,270h1v1h-1zM391,270h1v2h-1zM392,270h1v1h-1zM393,269h1v1h-1zM394,268h1v1h-1zM395,268h1v4h-1zM396,270h1v1h-1zM397,270h1v1h-1zM398,271h1v1h-1zM399,272h1v1h-1zM400,272h1v4h-1zM401,276h1v3h-1zM402,270h1v9h-1zM403,274h1v5h-1zM404,277h1v2h-1zM405,274h1v7h-1zM406,277h1v3h-1zM407,274h1v5h-1zM408,279h1v4h-1zM409,279h1v1h-1zM410,279h1v1h-1zM411,280h1v4h-1zM412,282h1v6h-1zM413,281h1v3h-1zM414,284h1v4h-1zM415,281h1v7h-1zM416,283h1v2h-1zM417,283h1v2h-1zM418,284h1v1h-1zM419,282h1v3h-1zM420,279h1v3h-1zM421,282h1v3h-1zM422,281h1v4h-1zM423,283h1v2h-1zM424,281h1v3h-1zM425,280h1v1h-1zM426,279h1v4h-1zM427,279h1v2h-1zM428,279h1v4h-1zM429,281h1v2h-1zM430,283h1v1h-1zM431,279h1v6h-1zM432,282h1v3h-1zM433,283h1v1h-1zM434,283h1v2h-1zM435,281h1v2h-1zM436,281h1v4h-1zM437,277h1v4h-1zM438,278h1v3h-1zM439,274h1v4h-1zM440,277h1v3h-1zM441,277h1v4h-1zM442,280h1v3h-1zM443,279h1v2h-1zM444,278h1v3h-1zM445,274h1v7h-1zM446,278h1v2h-1zM447,277h1v4h-1zM448,279h1v1h-1zM449,280h1v2h-1zM450,279h1v4h-1zM451,280h1v2h-1zM452,282h1v3h-1zM453,285h1v3h-1zM454,283h1v5h-1zM455,285h1v1h-1zM456,285h1v1h-1zM457,286h1v6h-1zM458,290h1v1h-1zM459,288h1v2h-1zM460,288h1v1h-1zM461,289h1v1h-1zM462,288h1v4h-1zM463,283h1v5h-1zM464,286h1v6h-1zM465,288h1v3h-1zM466,285h1v3h-1zM467,283h1v6h-1zM468,289h1v3h-1zM469,290h1v1h-1zM470,290h1v1h-1zM471,286h1v4h-1zM472,285h1v1h-1zM473,282h1v3h-1zM474,280h1v2h-1zM475,279h1v2h-1zM476,281h1v3h-1zM477,283h1v2h-1zM478,281h1v2h-1zM479,281h1v4h-1zM480,285h1v7h-1zM481,288h1v3h-1zM482,291h1v3h-1zM483,293h1v1h-1zM484,292h1v1h-1zM485,293h1v1h-1zM486,292h1v1h-1zM487,292h1v1h-1zM488,285h1v9h-1zM489,286h1v4h-1zM490,283h1v3h-1zM491,286h1v4h-1zM492,288h1v2h-1zM493,281h1v7h-1zM494,282h1v2h-1zM495,284h1v5h-1zM496,288h1v2h-1zM497,284h1v4h-1zM498,283h1v2h-1zM499,283h1v5h-1zM500,283h1v1h-1zM501,283h1v3h-1zM502,285h1v6h-1zM503,291h1v5h-1zM504,288h1v5h-1zM505,281h1v7h-1zM506,284h1v4h-1zM507,281h1v4h-1zM508,278h1v4h-1zM509,277h1v6h-1zM510,281h1v1h-1zM511,278h1v5h-1zM512,274h1v6h-1zM513,279h1v2h-1zM514,277h1v4h-1zM515,274h1v4h-1zM516,276h1v5h-1zM517,272h1v4h-1zM518,272h1v6h-1zM519,270h1v9h-1zM520,271h1v3h-1zM521,270h1v7h-1zM522,273h1v4h-1zM523,270h1v6h-1zM524,271h1v2h-1zM525,272h1v2h-1zM526,270h1v4h-1zM527,272h1v2h-1zM528,270h1v4h-1zM529,272h1v1h-1zM530,270h1v2h-1zM531,272h1v5h-1zM532,272h1v4h-1zM533,263h1v9h-1zM534,263h1v1h-1zM535,264h1v2h-1zM536,264h1v2h-1zM537,263h1v3h-1zM538,264h1v2h-1zM539,263h1v1h-1zM540,263h1v1h-1zM541,264h1v2h-1zM542,263h1v1h-1zM543,263h1v1h-1zM544,263h1v3h-1zM545,263h1v1h-1zM546,263h1v1h-1zM547,263h1v1h-1zM548,263h1v1h-1zM549,263h1v3h-1zM550,263h1v1h-1zM551,263h1v5h-1zM552,268h1v6h-1zM553,267h1v4h-1zM554,266h1v1h-1zM555,266h1v1h-1zM556,266h1v1h-1zM557,266h1v1h-1zM558,266h1v1h-1zM559,264h1v2h-1zM560,263h1v1h-1zM561,264h1v2h-1zM562,263h1v1h-1zM563,263h1v1h-1zM564,263h1v1h-1zM565,264h1v3h-1zM566,267h1v4h-1zM567,271h1v1h-1zM568,270h1v2h-1zM569,272h1v1h-1zM570,270h1v2h-1zM571,270h1v2h-1zM572,270h1v1h-1zM573,270h1v1h-1zM574,271h1v1h-1zM575,270h1v1h-1zM576,270h1v1h-1zM577,270h1v1h-1zM578,267h1v3h-1zM579,266h1v1h-1zM580,267h1v4h-1zM581,271h1v1h-1zM582,270h1v2h-1zM583,270h1v1h-1zM584,270h1v1h-1zM585,270h1v2h-1zM586,271h1v1h-1zM587,270h1v7h-1zM588,277h1v5h-1zM589,273h1v10h-1zM590,272h1v1h-1zM591,272h1v1h-1zM592,272h1v1h-1zM593,272h1v1h-1zM594,272h1v1h-1zM595,272h1v1h-1zM596,272h1v1h-1zM597,272h1v1h-1zM598,272h1v1h-1zM599,272h1v1h-1zM600,272h1v1h-1zM601,270h1v2h-1zM602,271h1v1h-1zM603,272h1v4h-1zM604,276h1v10h-1zM605,285h1v5h-1zM606,277h1v8h-1zM607,277h1v1h-1zM608,276h1v1h-1zM609,272h1v4h-1zM610,273h1v1h-1zM611,274h1v3h-1zM612,277h1v1h-1zM613,277h1v1h-1zM614,278h1v1h-1zM615,279h1v1h-1zM616,277h1v2h-1zM617,277h1v1h-1zM618,278h1v1h-1zM619,279h1v1h-1zM620,279h1v1h-1zM621,279h1v1h-1zM622,279h1v1h-1zM623,279h1v7h-1zM624,286h1v7h-1zM625,282h1v12h-1zM626,279h1v3h-1zM627,279h1v2h-1zM628,279h1v2h-1zM629,279h1v1h-1zM630,279h1v2h-1zM631,280h1v1h-1zM632,281h1v2h-1zM633,283h1v1h-1zM634,284h1v5h-1zM635,289h1v1h-1zM636,290h1v1h-1zM637,291h1v1h-1zM638,292h1v1h-1zM639,292h1v1h-1zM640,292h1v1h-1zM641,292h1v1h-1zM642,292h1v1h-1zM643,292h1v1h-1zM644,292h1v1h-1zM645,292h1v1h-1zM646,292h1v1h-1zM647,292h1v1h-1zM648,292h1v1h-1zM649,292h1v1h-1zM650,292h1v1h-1zM651,292h1v1h-1zM652,292h1v1h-1zM653,292h1v1h-1zM654,292h1v1h-1zM655,292h1v1h-1zM656,292h1v1h-1zM657,292h1v1h-1zM658,292h1v1h-1zM659,292h1v1h-1zM660,292h1v1h-1zM661,292h1v1h-1zM662,292h1v1h-1zM663,292h1v1h-1zM664,292h1v2h-1zM665,294h1v1h-1zM666,295h1v1h-1zM667,295h1v1h-1zM668,296h1v2h-1zM669,298h1v1h-1zM670,299h1v1h-1zM671,300h1v1h-1zM672,300h1v1h-1zM673,300h1v1h-1zM674,301h1v1h-1zM675,301h1v1h-1zM676,301h1v1h-1zM677,301h1v3h-1zM678,301h1v1h-1zM679,301h1v1h-1zM680,301h1v1h-1zM681,301h1v1h-1zM682,301h1v1h-1zM683,301h1v1h-1zM684,301h1v1h-1zM685,301h1v1h-1zM686,301h1v1h-1zM687,301h1v1h-1zM688,301h1v1h-1zM689,301h1v1h-1zM690,301h1v1h-1zM691,301h1v1h-1zM692,301h1v1h-1zM693,301h1v1h-1zM694,301h1v1h-1zM695,301h1v1h-1zM696,301h1v1h-1zM697,302h1v1h-1zM698,301h1v1h-1zM699,301h1v1h-1zM700,301h1v1h-1zM701,301h1v1h-1zM702,301h1v1h-1zM703,302h1v1h-1zM704,303h1v1h-1zM705,303h1v1h-1zM706,303h1v1h-1zM707,303h1v4h-1zM708,303h1v2h-1zM709,303h1v1h-1zM710,303h1v1h-1zM711,303h1v1h-1zM712,303h1v1h-1zM713,303h1v2h-1zM714,305h1v2h-1zM715,303h1v2h-1zM716,305h1v2h-1zM717,303h1v2h-1zM718,305h1v2h-1zM719,303h1v2h-1zM720,304h1v2h-1zM721,305h1v2h-1zM722,303h1v2h-1zM723,303h1v4h-1zM724,303h1v1h-1zM725,303h1v1h-1zM726,303h1v1h-1zM727,303h1v1h-1zM728,303h1v1h-1zM729,303h1v1h-1zM730,303h1v1h-1zM731,303h1v1h-1zM732,303h1v1h-1zM733,303h1v1h-1zM734,303h1v1h-1zM735,303h1v1h-1zM736,303h1v1h-1zM737,303h1v1h-1zM738,303h1v1h-1zM739,303h1v1h-1zM740,303h1v1h-1zM741,303h1v1h-1zM742,303h1v1h-1zM743,303h1v1h-1zM744,303h1v1h-1zM745,303h1v1h-1zM746,303h1v1h-1zM747,303h1v1h-1zM748,303h1v1h-1zM749,303h1v1h-1zM750,303h1v1h-1zM751,303h1v1h-1zM752,303h1v1h-1zM753,303h1v1h-1zM754,303h1v1h-1zM755,303h1v1h-1zM756,303h1v1h-1zM757,303h1v1h-1zM758,303h1v1h-1zM759,303h1v1h-1zM760,303h1v1h-1zM761,303h1v1h-1zM762,303h1v1h-1zM763,303h1v1h-1zM764,303h1v1h-1zM765,303h1v1h-1zM766,303h1v1h-1zM767,303h1v1h-1zM768,303h1v1h-1zM769,303h1v1h-1zM770,303h1v2h-1zM771,303h1v4h-1zM772,303h1v1h-1zM773,303h1v1h-1zM774,303h1v1h-1zM775,303h1v1h-1zM776,303h1v1h-1zM777,303h1v1h-1zM778,303h1v1h-1zM779,303h1v1h-1zM780,303h1v1h-1zM781,303h1v1h-1zM782,303h1v1h-1zM783,303h1v1h-1zM784,303h1v1h-1zM785,303h1v1h-1zM786,303h1v1h-1zM787,303h1v1h-1zM788,303h1v1h-1zM789,303h1v1h-1zM790,303h1v1h-1zM791,303h1v1h-1zM792,303h1v1h-1zM793,303h1v1h-1zM794,303h1v1h-1zM795,303h1v1h-1zM796,303h1v1h-1zM797,303h1v1h-1zM798,303h1v1h-1zM799,303h1v4h-1zM800,303h1v2h-1zM801,303h1v1h-1zM802,303h1v1h-1zM803,303h1v1h-1zM804,303h1v1h-1zM805,303h1v1h-1zM806,303h1v2h-1zM807,305h1v2h-1zM808,303h1v2h-1zM809,305h1v2h-1zM810,303h1v2h-1zM811,305h1v2h-1zM812,303h1v2h-1zM813,303h1v1h-1zM814,303h1v1h-1zM815,303h1v1h-1zM816,303h1v2h-1zM817,305h1v2h-1zM818,303h1v2h-1zM819,305h1v2h-1zM820,303h1v2h-1zM821,305h1v2h-1zM822,303h1v2h-1zM823,303h1v1h-1zM824,303h1v1h-1zM825,303h1v1h-1zM826,303h1v1h-1zM827,303h1v1h-1zM828,303h1v1h-1zM829,303h1v2h-1zM830,303h1v4h-1zM831,303h1v1h-1zM832,303h1v1h-1zM833,301h1v2h-1zM834,301h1v1h-1zM835,301h1v1h-1zM836,301h1v1h-1zM837,301h1v1h-1zM838,301h1v1h-1zM839,301h1v1h-1zM840,301h1v1h-1zM841,301h1v1h-1zM842,301h1v1h-1z" fill="#1c10dc" shape-rendering="crispEdges"/>
<rect x="70" y="303" width="1.6" height="90" fill="#5000a0"/>
<rect x="282.3" y="296" width="3.0" height="90.3" fill="#5c0094"/>
</svg>
<div class="lbl" style="left:18px;top:61.4px">TS ok</div>
<div class="lbl" style="left:25.4px;top:192.5px;color:#0000ff">RF</div>
<div class="lbl" style="left:26.4px;top:228.6px;color:#ffff00;letter-spacing:0.9px">Mer</div>
<div class="lbl" style="left:25.6px;top:264.4px;color:#ff0000">Vber</div>

<div class="s" style="left:12.4px;top:424.3px;letter-spacing:-0.25px">1220</div>
<div class="s" style="left:91px;top:424px">-77</div>
<div class="s" style="left:7px;top:578px">1.845</div>
<div class="s" style="left:7px;top:597px">0.436</div>
<div class="s" style="left:128.5px;top:622px;letter-spacing:-0.1px">DD1US_TiouneData_14_10_2017_14h24mn02s.txt</div>

<div id="grid"><div class="in" id="gin">
<div class="hc" style="left:0px;width:81px;;letter-spacing:-0.4px">Time</div>
<div class="hc" style="left:81px;width:49px;background:#0000d0;color:#fff;letter-spacing:-0.2px">RFPower</div>
<div class="hc" style="left:130px;width:49px;background:#ffff00;letter-spacing:-0.4px">MERx10</div>
<div class="hc" style="left:179px;width:49px;background:#ff0000;color:#fff;letter-spacing:-0.2px">VBer%</div>
<div class="hc" style="left:228px;width:49px;;letter-spacing:0.12px">Vit. err</div>
<div class="hc" style="left:277px;width:49px;;letter-spacing:-0.4px">TS err</div>
<div class="hc" style="left:326px;width:49px;;letter-spacing:0.07px">Freq lock</div>
<div class="hc" style="left:375px;width:49px;;letter-spacing:-0.3px">SR lock</div>
<div class="hc" style="left:424px;width:49px;;letter-spacing:-0.4px">FEC</div>
<div class="hc" style="left:473px;width:49px;;letter-spacing:-0.6px">TS OK</div>
<div class="c" style="left:0px;top:17px;width:81px;padding-left:3px;">14:32:46:360</div>
<div class="c" style="left:81px;top:17px;width:49px;">-79</div>
<div class="c" style="left:130px;top:17px;width:49px;">0</div>
<div class="c" style="left:179px;top:17px;width:49px;">100</div>
<div class="c" style="left:228px;top:17px;width:49px;">-</div>
<div class="c" style="left:277px;top:17px;width:49px;">-</div>
<div class="c" style="left:326px;top:17px;width:49px;">0</div>
<div class="c" style="left:375px;top:17px;width:49px;">0</div>
<div class="c" style="left:424px;top:17px;width:49px;">?/?</div>
<div class="c" style="left:473px;top:17px;width:49px;">0</div>
<div class="c" style="left:0px;top:34px;width:81px;padding-left:3px;">14:32:46:797</div>
<div class="c" style="left:81px;top:34px;width:49px;">-78</div>
<div class="c" style="left:130px;top:34px;width:49px;">0</div>
<div class="c" style="left:179px;top:34px;width:49px;">100</div>
<div class="c" style="left:228px;top:34px;width:49px;">-</div>
<div class="c" style="left:277px;top:34px;width:49px;">-</div>
<div class="c" style="left:326px;top:34px;width:49px;">0</div>
<div class="c" style="left:375px;top:34px;width:49px;">0</div>
<div class="c" style="left:424px;top:34px;width:49px;">?/?</div>
<div class="c" style="left:473px;top:34px;width:49px;">0</div>
<div class="c" style="left:0px;top:51px;width:81px;padding-left:3px;">14:32:47:233</div>
<div class="c" style="left:81px;top:51px;width:49px;">-78</div>
<div class="c" style="left:130px;top:51px;width:49px;">0</div>
<div class="c" style="left:179px;top:51px;width:49px;">100</div>
<div class="c" style="left:228px;top:51px;width:49px;">-</div>
<div class="c" style="left:277px;top:51px;width:49px;">-</div>
<div class="c" style="left:326px;top:51px;width:49px;">0</div>
<div class="c" style="left:375px;top:51px;width:49px;">0</div>
<div class="c" style="left:424px;top:51px;width:49px;">?/?</div>
<div class="c" style="left:473px;top:51px;width:49px;">0</div>
<div class="c" style="left:0px;top:68px;width:81px;padding-left:3px;">14:32:47:678</div>
<div class="c" style="left:81px;top:68px;width:49px;">-78</div>
<div class="c" style="left:130px;top:68px;width:49px;">0</div>
<div class="c" style="left:179px;top:68px;width:49px;">100</div>
<div class="c" style="left:228px;top:68px;width:49px;">-</div>
<div class="c" style="left:277px;top:68px;width:49px;">-</div>
<div class="c" style="left:326px;top:68px;width:49px;">0</div>
<div class="c" style="left:375px;top:68px;width:49px;">0</div>
<div class="c" style="left:424px;top:68px;width:49px;">?/?</div>
<div class="c" style="left:473px;top:68px;width:49px;">0</div>
<div class="c" style="left:0px;top:85px;width:81px;padding-left:3px;">14:32:48:117</div>
<div class="c" style="left:81px;top:85px;width:49px;">-78</div>
<div class="c" style="left:130px;top:85px;width:49px;">0</div>
<div class="c" style="left:179px;top:85px;width:49px;">100</div>
<div class="c" style="left:228px;top:85px;width:49px;">-</div>
<div class="c" style="left:277px;top:85px;width:49px;">-</div>
<div class="c" style="left:326px;top:85px;width:49px;">0</div>
<div class="c" style="left:375px;top:85px;width:49px;">0</div>
<div class="c" style="left:424px;top:85px;width:49px;">?/?</div>
<div class="c" style="left:473px;top:85px;width:49px;">0</div>
<div class="c" style="left:0px;top:102px;width:81px;padding-left:3px;">14:32:48:555</div>
<div class="c" style="left:81px;top:102px;width:49px;">-78</div>
<div class="c" style="left:130px;top:102px;width:49px;">0</div>
<div class="c" style="left:179px;top:102px;width:49px;">100</div>
<div class="c" style="left:228px;top:102px;width:49px;">-</div>
<div class="c" style="left:277px;top:102px;width:49px;">-</div>
<div class="c" style="left:326px;top:102px;width:49px;">0</div>
<div class="c" style="left:375px;top:102px;width:49px;">0</div>
<div class="c" style="left:424px;top:102px;width:49px;">?/?</div>
<div class="c" style="left:473px;top:102px;width:49px;">0</div>
<div class="c" style="left:0px;top:119px;width:81px;padding-left:3px;">14:32:48:983</div>
<div class="c" style="left:81px;top:119px;width:49px;">-77</div>
<div class="c" style="left:130px;top:119px;width:49px;">0</div>
<div class="c" style="left:179px;top:119px;width:49px;">100</div>
<div class="c" style="left:228px;top:119px;width:49px;">-</div>
<div class="c" style="left:277px;top:119px;width:49px;">-</div>
<div class="c" style="left:326px;top:119px;width:49px;">0</div>
<div class="c" style="left:375px;top:119px;width:49px;">0</div>
<div class="c" style="left:424px;top:119px;width:49px;">?/?</div>
<div class="c" style="left:473px;top:119px;width:49px;">0</div>
<div class="c" style="left:0px;top:136px;width:81px;padding-left:3px;">14:32:49:418</div>
<div class="c" style="left:81px;top:136px;width:49px;">-77</div>
<div class="c" style="left:130px;top:136px;width:49px;">0</div>
<div class="c" style="left:179px;top:136px;width:49px;">100</div>
<div class="c" style="left:228px;top:136px;width:49px;">-</div>
<div class="c" style="left:277px;top:136px;width:49px;">-</div>
<div class="c" style="left:326px;top:136px;width:49px;">0</div>
<div class="c" style="left:375px;top:136px;width:49px;">0</div>
<div class="c" style="left:424px;top:136px;width:49px;">?/?</div>
<div class="c" style="left:473px;top:136px;width:49px;">0</div>
<div class="c" style="left:0px;top:153px;width:81px;padding-left:3px;background:#0a246a;color:#fff;">14:32:49:852</div>
<div class="c" style="left:81px;top:153px;width:49px;">-77</div>
<div class="c" style="left:130px;top:153px;width:49px;">0</div>
<div class="c" style="left:179px;top:153px;width:49px;">100</div>
<div class="c" style="left:228px;top:153px;width:49px;">-</div>
<div class="c" style="left:277px;top:153px;width:49px;">-</div>
<div class="c" style="left:326px;top:153px;width:49px;">0</div>
<div class="c" style="left:375px;top:153px;width:49px;">0</div>
<div class="c" style="left:424px;top:153px;width:49px;">?/?</div>
<div class="c" style="left:473px;top:153px;width:49px;">0</div>
<div class="c" style="left:0px;top:170px;width:81px;padding-left:3px;"></div>
<div class="c" style="left:81px;top:170px;width:49px;"></div>
<div class="c" style="left:130px;top:170px;width:49px;"></div>
<div class="c" style="left:179px;top:170px;width:49px;"></div>
<div class="c" style="left:228px;top:170px;width:49px;"></div>
<div class="c" style="left:277px;top:170px;width:49px;"></div>
<div class="c" style="left:326px;top:170px;width:49px;"></div>
<div class="c" style="left:375px;top:170px;width:49px;"></div>
<div class="c" style="left:424px;top:170px;width:49px;"></div>
<div class="c" style="left:473px;top:170px;width:49px;"></div>
<div class="abs" style="left:525px;top:0;width:16px;height:172px;background:repeating-conic-gradient(#fff 0% 25%, #d4d0c8 0% 50%) 0 0/2px 2px"></div>
<div class="abs" style="left:525px;top:0px;width:16px;height:17px;background:#d4d0c8;border-style:solid;border-width:1px;border-color:#fff #404040 #404040 #fff;box-shadow:inset -1px -1px 0 #808080"><div class="abs" style="left:3px;top:5px;width:0;height:0;border-left:4px solid transparent;border-right:4px solid transparent;border-bottom:4px solid #000"></div></div>
<div class="abs" style="left:525px;top:140px;width:16px;height:16px;background:#d4d0c8;border-style:solid;border-width:1px;border-color:#fff #404040 #404040 #fff;box-shadow:inset -1px -1px 0 #808080"></div>
<div class="abs" style="left:525px;top:156px;width:16px;height:16px;background:#d4d0c8;border-style:solid;border-width:1px;border-color:#fff #404040 #404040 #fff;box-shadow:inset -1px -1px 0 #808080"><div class="abs" style="left:3px;top:5px;width:0;height:0;border-left:4px solid transparent;border-right:4px solid transparent;border-top:4px solid #000"></div></div>
</div></div>

<!-- time window -->
<div class="abs" style="left:598px;top:458px;width:83px;height:140px;background:#d4d0c8;border-style:solid;border-width:1px;border-color:#fff #808080 #808080 #fff"></div>
<div class="abs" style="left:603px;top:471.5px;width:72px;height:114px;border:1px solid #808080;box-shadow:1px 1px 0 #fff, inset 1px 1px 0 #fff"></div>
<div class="s" style="left:609.5px;top:467px;background:#d4d0c8;padding:0 1px;letter-spacing:-0.25px">TimeWindow</div>
<div class="radio" style="top:482px"><div class="abs" style="left:3px;top:3px;width:4px;height:4px;border-radius:50%;background:#000"></div></div>
<div class="radio" style="top:499px"></div><div class="radio" style="top:516px"></div><div class="radio" style="top:533px"></div><div class="radio" style="top:550px"></div><div class="radio" style="top:567px"></div>
<div class="rl" style="top:481.7px">full data</div><div class="rl" style="top:498.7px">1H</div><div class="rl" style="top:515.7px;letter-spacing:-0.55px">20mn</div><div class="rl" style="top:532.7px;letter-spacing:-0.55px">10mn</div><div class="rl" style="top:549.7px;letter-spacing:-0.55px">5mn</div><div class="rl" style="top:566.7px;letter-spacing:-0.55px">2mn</div>

<div class="btn" style="left:711px;top:450px;width:113px;height:32px;line-height:30.5px;letter-spacing:-0.2px">Load TiouneData</div>
<div class="s" style="left:695px;top:487px;letter-spacing:-0.15px">Total Time= 532021 msec</div>
<div class="s" style="left:695px;top:506px;letter-spacing:-0.2px">= 0h 8mn 52sec 21msec</div>
<div class="s" style="left:695px;top:522px;letter-spacing:-0.2px">1219 records</div>
<div class="s" style="left:698px;top:541px;letter-spacing:-0.17px">2.291 sample/sec</div>
<div class="btn" style="left:736px;top:559px;width:72px;height:52px;line-height:51px">Quit</div>
</body></html>
